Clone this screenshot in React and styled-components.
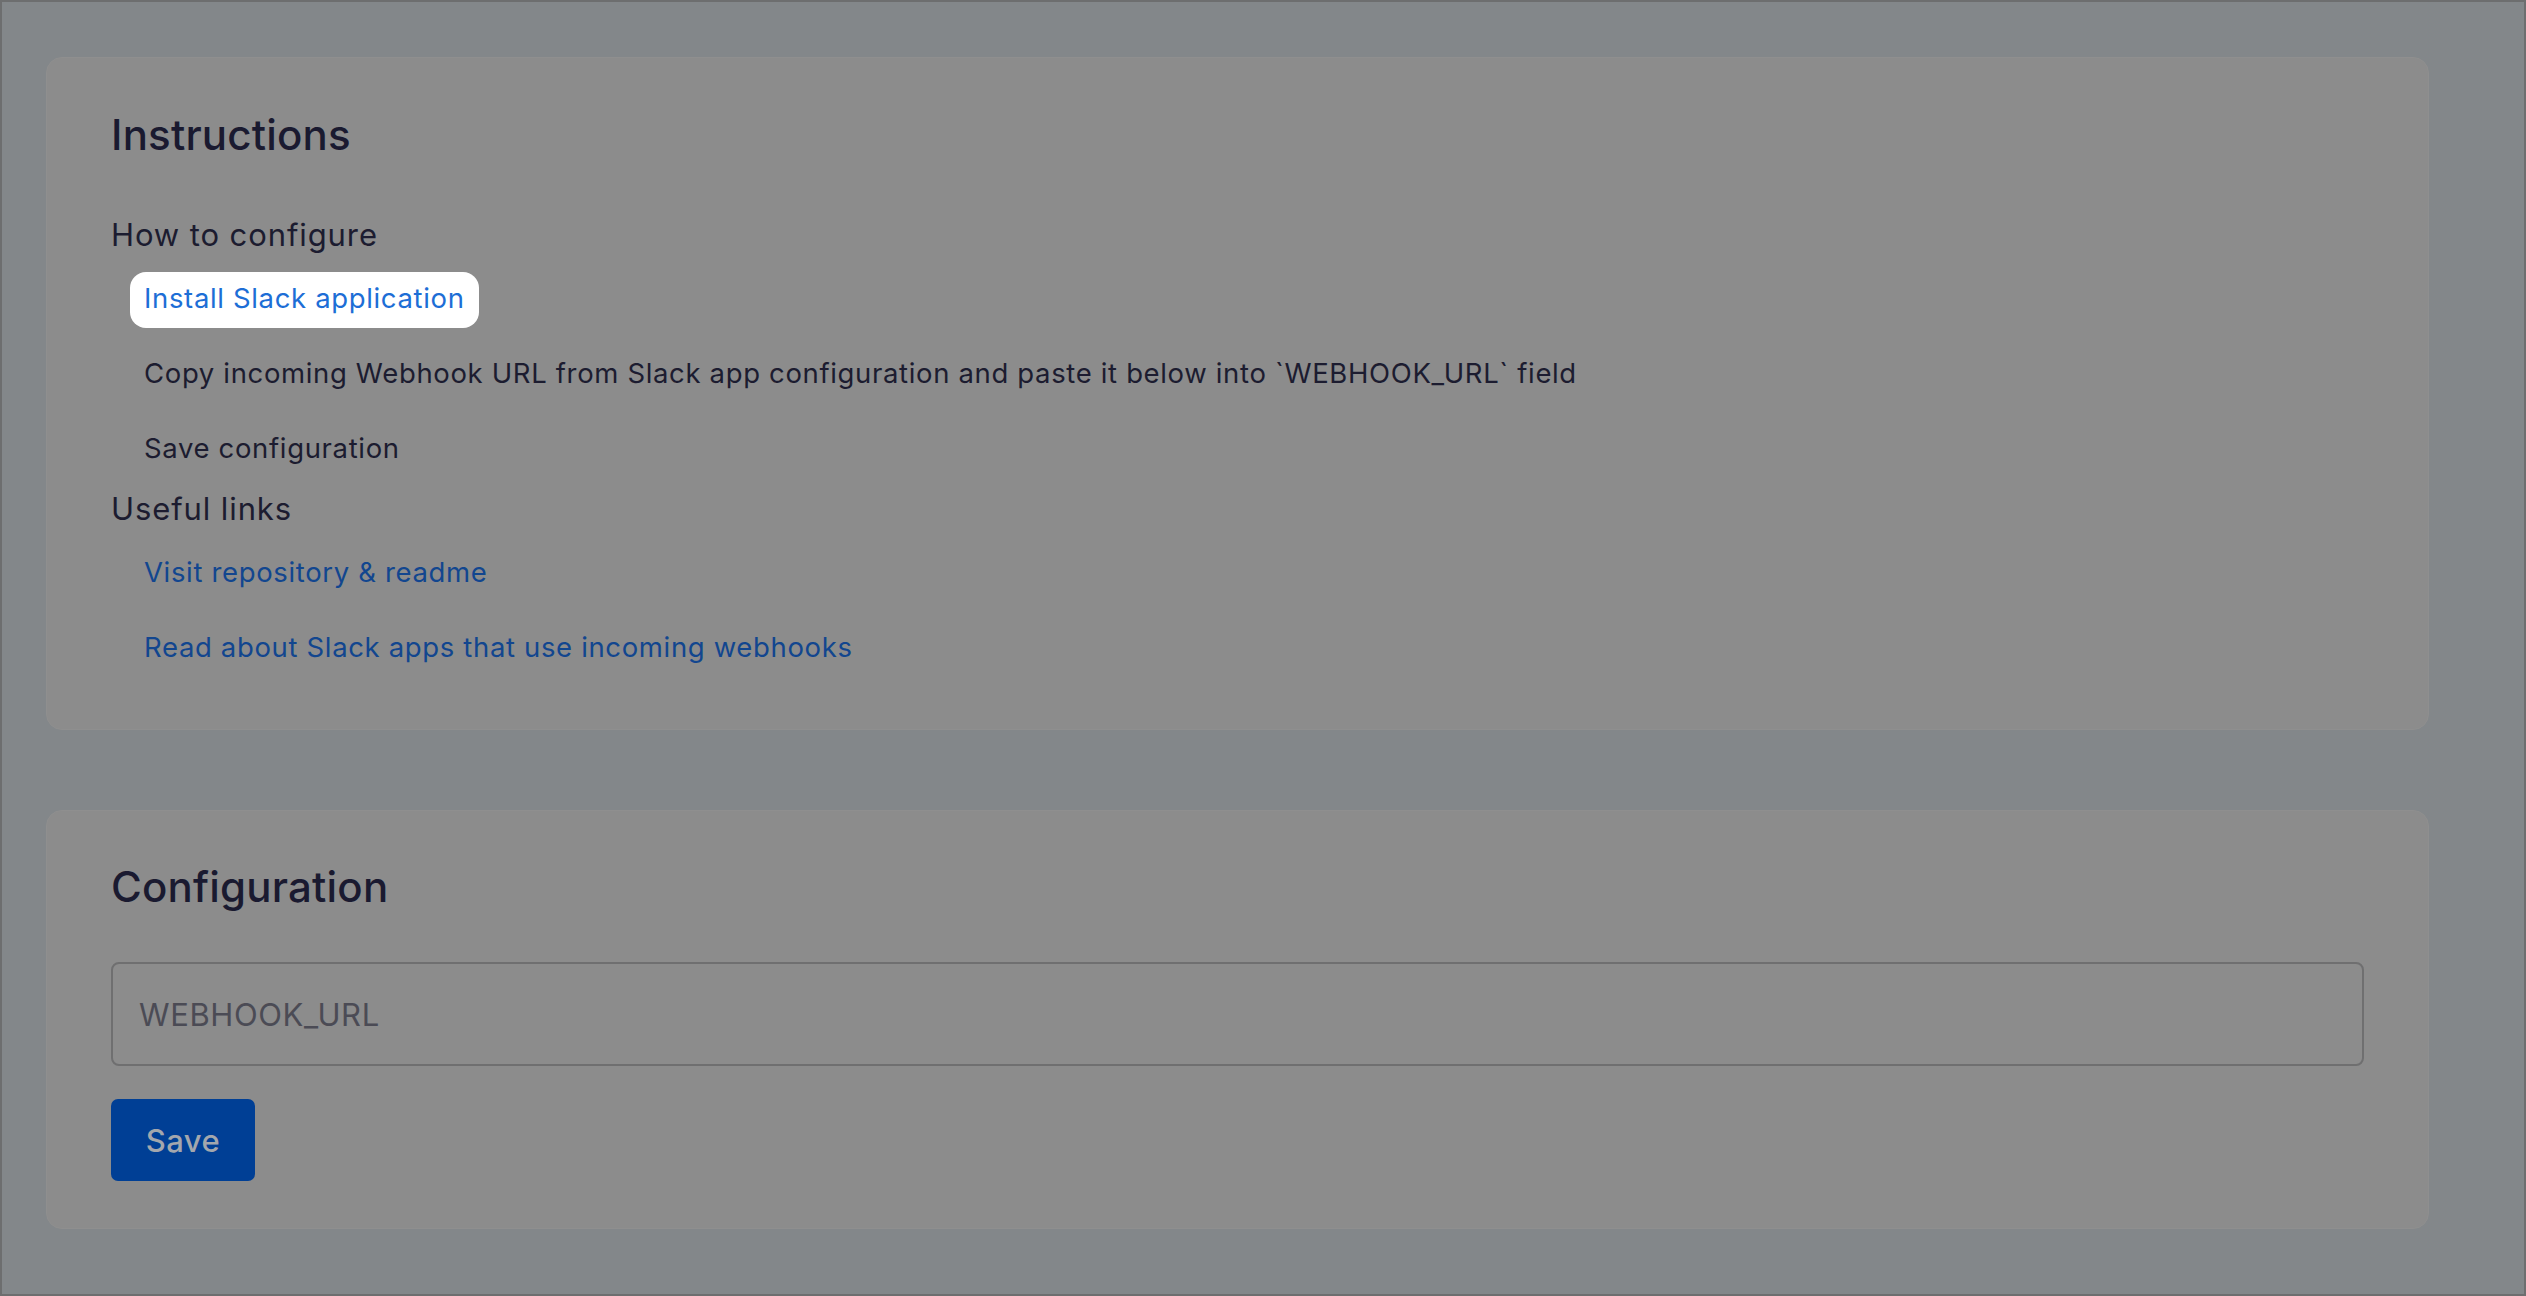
import React from 'react'
import styled, { createGlobalStyle } from 'styled-components'

const GlobalStyle = createGlobalStyle`
  * { box-sizing: border-box; }
  html, body { margin: 0; padding: 0; }
  body {
    font-family: Inter, "Noto Sans", "Liberation Sans", sans-serif;
    background: #83878a;
  }
`

const Page = styled.div`
  width: 2526px;
  height: 1296px;
  border: 2px solid #6d6e6f;
  background: #83878a;
  padding: 55px 95px 0 44px;
  display: flex;
  flex-direction: column;
  gap: 80px;
  overflow: hidden;
`

const Card = styled.section`
  background: #8c8c8c;
  border-radius: 16px;
  border: 1px solid #8f8f8f;
  padding: ${p => p.$pad};
  display: flex;
  flex-direction: column;
`

const Heading = styled.h2`
  margin: 0 0 ${p => p.$gap}px;
  font-size: 42px;
  line-height: 50px;
  font-weight: 500;
  color: #1a1a30;
  letter-spacing: 0.2px;
`

const SubHeading = styled.h3`
  margin: 0 0 19px;
  font-size: 31px;
  line-height: 36px;
  font-weight: 400;
  letter-spacing: 0.9px;
  color: #1c1c30;
`

const Steps = styled.ul`
  list-style: none;
  margin: 0 0 ${p => p.$after}px;
  padding: 0 0 0 19px;
  display: flex;
  flex-direction: column;
  gap: 19px;
`

const Step = styled.li`
  font-size: 27.5px;
  line-height: 32px;
  letter-spacing: 0.65px;
  height: 56px;
  display: flex;
  align-items: flex-start;
`

const StepText = styled.span`
  display: inline-block;
  padding: 10px 14px 14px;
  color: #1c1c30;
`

const StepLink = styled.a`
  display: inline-block;
  padding: 10px 14px 14px;
  border-radius: 16px;
  text-decoration: none;
  color: ${p => (p.$spot ? '#1d6ed6' : '#12468f')};
  background: ${p => (p.$spot ? '#ffffff' : 'transparent')};
`

const Field = styled.input`
  width: 100%;
  height: 104px;
  margin: 0 0 33px;
  border: 2px solid #6f6f70;
  border-radius: 8px;
  background: #8c8c8c;
  padding: 0 26px;
  font-family: inherit;
  font-size: 31px;
  letter-spacing: 0.6px;
  color: #1c1c30;
  outline: none;

  &::placeholder {
    color: #4b4b55;
  }
`

const SaveButton = styled.button`
  align-self: flex-start;
  width: 144px;
  height: 82px;
  border: none;
  border-radius: 7px;
  background: #003f95;
  color: #a3a7ad;
  font-family: inherit;
  font-size: 31px;
  font-weight: 500;
  letter-spacing: 0.5px;
  cursor: pointer;
`

export default function App() {
  return (
    <>
      <GlobalStyle />
      <Page>
        <Card $pad="52px 64px 52px">
          <Heading $gap={57}>Instructions</Heading>
          <SubHeading>How to configure</SubHeading>
          <Steps $after={13}>
            <Step>
              <StepLink $spot href="#">Install Slack application</StepLink>
            </Step>
            <Step>
              <StepText>Copy incoming Webhook URL from Slack app configuration and paste it below into `WEBHOOK_URL` field</StepText>
            </Step>
            <Step>
              <StepText>Save configuration</StepText>
            </Step>
          </Steps>
          <SubHeading>Useful links</SubHeading>
          <Steps $after={0}>
            <Step>
              <StepLink href="#">Visit repository &amp; readme</StepLink>
            </Step>
            <Step>
              <StepLink href="#">Read about Slack apps that use incoming webhooks</StepLink>
            </Step>
          </Steps>
        </Card>
        <Card $pad="51px 64px 47px">
          <Heading $gap={50}>Configuration</Heading>
          <Field placeholder="WEBHOOK_URL" />
          <SaveButton>Save</SaveButton>
        </Card>
      </Page>
    </>
  )
}
